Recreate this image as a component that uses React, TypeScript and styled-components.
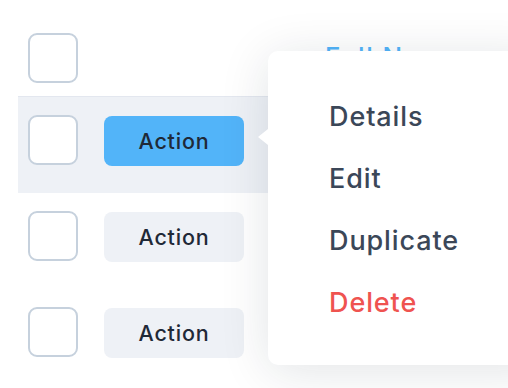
import React from "react";
import styled, { createGlobalStyle } from "styled-components";

const Global = createGlobalStyle`
  html, body { margin: 0; padding: 0; background: #ffffff; }
  body { font-family: Inter, "Open Sans", sans-serif; overflow: hidden; }
`;

const Page = styled.div`
  position: relative;
  width: 508px;
  height: 388px;
  overflow: hidden;
  background: #ffffff;
`;

const Table = styled.div`
  display: flex;
  flex-direction: column;
  padding-left: 18px;
`;

const HeaderRow = styled.div`
  display: flex;
  align-items: flex-start;
  height: 97px;
  padding: 33px 0 0 10px;
  box-sizing: border-box;
  border-bottom: 1px solid #e3e7ef;
`;

const Row = styled.div<{ $active?: boolean }>`
  display: flex;
  align-items: flex-start;
  gap: 26px;
  height: 96px;
  padding: 18px 0 0 10px;
  box-sizing: border-box;
  background: ${(p) => (p.$active ? "#eef1f6" : "transparent")};
`;

const Check = styled.div`
  width: 50px;
  height: 50px;
  box-sizing: border-box;
  border: 2px solid #c6d1dd;
  border-radius: 9px;
  background: #ffffff;
  flex: none;
`;

const HeaderLabel = styled.div`
  margin: 8px 0 0 247px;
  font-size: 26px;
  font-weight: 500;
  letter-spacing: 1.5px;
  color: #52b4f9;
  line-height: 32px;
  white-space: nowrap;
`;

const ActionButton = styled.button<{ $active?: boolean }>`
  width: 140px;
  height: 50px;
  margin-top: 1px;
  border: none;
  border-radius: 8px;
  background: ${(p) => (p.$active ? "#52b4f9" : "#eef1f6")};
  color: #1f2937;
  font-family: Inter, "Open Sans", sans-serif;
  font-size: 21.5px;
  font-weight: 500;
  letter-spacing: 0.8px;
  display: flex;
  align-items: center;
  justify-content: center;
  padding: 0;
`;

const Menu = styled.div`
  position: absolute;
  left: 268px;
  top: 51px;
  width: 280px;
  height: 314px;
  background: #ffffff;
  border-radius: 10px;
  box-shadow: 0 6px 50px rgba(20, 30, 50, 0.12);
  padding: 35px 0 0 61px;
  box-sizing: border-box;
  display: flex;
  flex-direction: column;
`;

const Arrow = styled.div`
  position: absolute;
  left: -10px;
  top: 78px;
  width: 0;
  height: 0;
  border-top: 8px solid transparent;
  border-bottom: 8px solid transparent;
  border-right: 10px solid #ffffff;
`;

const MenuItem = styled.div<{ $danger?: boolean }>`
  font-size: 27px;
  font-weight: 500;
  letter-spacing: 0.9px;
  line-height: 62px;
  height: 62px;
  color: ${(p) => (p.$danger ? "#ef5350" : "#3b4758")};
  white-space: nowrap;
`;

export default function App() {
  return (
    <Page>
      <Global />
      <Table>
        <HeaderRow>
          <Check />
          <HeaderLabel>Full Name</HeaderLabel>
        </HeaderRow>
        <Row $active>
          <Check />
          <ActionButton $active>Action</ActionButton>
        </Row>
        <Row>
          <Check />
          <ActionButton>Action</ActionButton>
        </Row>
        <Row>
          <Check />
          <ActionButton>Action</ActionButton>
        </Row>
      </Table>
      <Menu>
        <Arrow />
        <MenuItem>Details</MenuItem>
        <MenuItem>Edit</MenuItem>
        <MenuItem>Duplicate</MenuItem>
        <MenuItem $danger>Delete</MenuItem>
      </Menu>
    </Page>
  );
}
